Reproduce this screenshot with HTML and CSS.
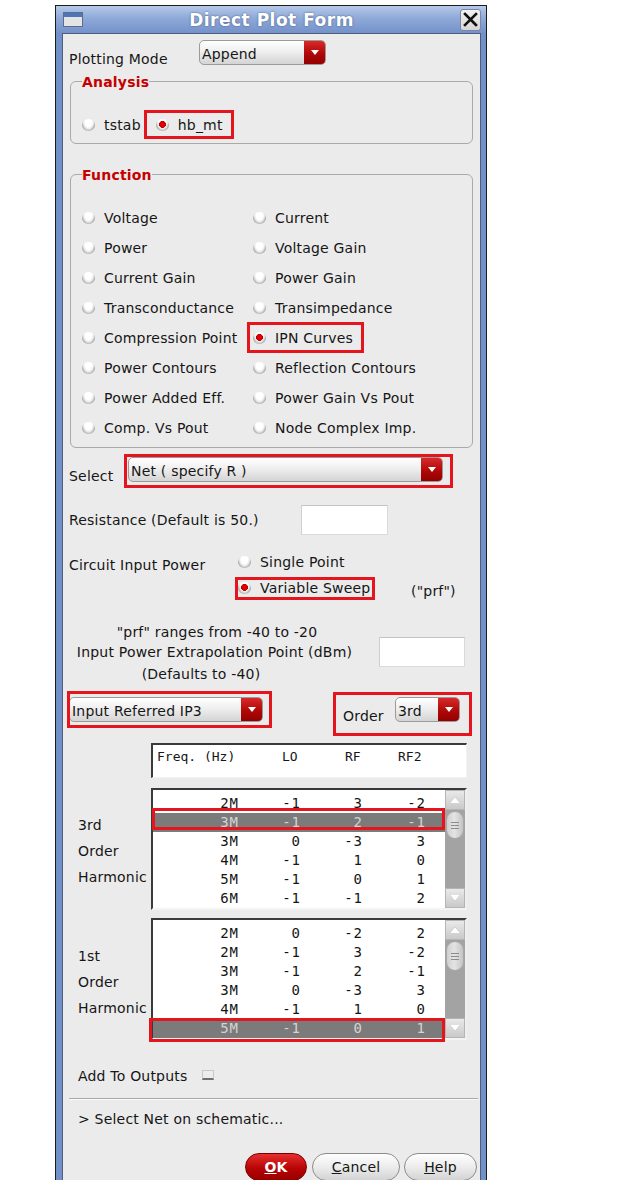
FILE: index.html
```html
<!DOCTYPE html>
<html lang="en">
<head>
<meta charset="utf-8">
<title>Direct Plot Form</title>
<link rel="stylesheet" href="styles.css">
</head>
<body>
<div class="window">
  <div class="titlebar">
    <span class="win-icon"></span>
    <span class="title">Direct Plot Form</span>
    <span class="close"><svg width="15" height="15" viewBox="0 0 15 15"><path d="M2 2L13 13M13 2L2 13" stroke="#111" stroke-width="2.6" stroke-linecap="square" fill="none"/></svg></span>
  </div>
  <div class="content">
    <div class="field-row row-plot">
      <span class="lbl lbl-plot">Plotting Mode</span>
      <div class="combo combo-append"><span class="combo-text">Append</span><span class="combo-btn"></span></div>
    </div>

    <fieldset class="group group-analysis">
      <legend>Analysis</legend>
      <div class="radio-row">
        <span class="opt"><span class="radio"></span>tstab</span>
        <span class="opt opt-hb mark mark-hb"><span class="radio on"></span>hb_mt</span>
      </div>
    </fieldset>

    <fieldset class="group group-function">
      <legend>Function</legend>
      <div class="func-grid">
        <span class="opt"><span class="radio"></span>Voltage</span>
        <span class="opt"><span class="radio"></span>Current</span>
        <span class="opt"><span class="radio"></span>Power</span>
        <span class="opt"><span class="radio"></span>Voltage Gain</span>
        <span class="opt"><span class="radio"></span>Current Gain</span>
        <span class="opt"><span class="radio"></span>Power Gain</span>
        <span class="opt"><span class="radio"></span>Transconductance</span>
        <span class="opt"><span class="radio"></span>Transimpedance</span>
        <span class="opt"><span class="radio"></span>Compression Point</span>
        <span class="opt mark mark-ipn"><span class="radio on"></span>IPN Curves</span>
        <span class="opt"><span class="radio"></span>Power Contours</span>
        <span class="opt"><span class="radio"></span>Reflection Contours</span>
        <span class="opt"><span class="radio"></span>Power Added Eff.</span>
        <span class="opt"><span class="radio"></span>Power Gain Vs Pout</span>
        <span class="opt"><span class="radio"></span>Comp. Vs Pout</span>
        <span class="opt"><span class="radio"></span>Node Complex Imp.</span>
      </div>
    </fieldset>

    <div class="field-row row-select">
      <span class="lbl lbl-select">Select</span>
      <div class="combo combo-net mark mark-select"><span class="combo-text">Net ( specify R )</span><span class="combo-btn"></span></div>
    </div>

    <div class="row-res">
      <span class="lbl-res">Resistance (Default is 50.)</span>
      <span class="entry"></span>
    </div>

    <div class="power-grid">
      <span class="lbl-power">Circuit Input Power</span>
      <span class="opt opt-line"><span class="radio"></span>Single Point</span>
      <span class="opt opt-line opt-sweep mark mark-sweep"><span class="radio on"></span>Variable Sweep</span>
      <span class="prf-tag">("prf")</span>
    </div>

    <div class="prf">
      <div class="prf-text">
        <div class="prf-l1">"prf" ranges from -40 to -20</div>
        <div>Input Power Extrapolation Point (dBm)</div>
        <div class="prf-l3">(Defaults to -40)</div>
      </div>
      <span class="entry entry-prf"></span>
    </div>

    <div class="row-ip3">
      <div class="combo combo-ip3 mark mark-ip3"><span class="combo-text">Input Referred IP3</span><span class="combo-btn"></span></div>
      <div class="order mark mark-order">
        <span class="lbl lbl-order">Order</span>
        <div class="combo combo-order"><span class="combo-text">3rd</span><span class="combo-btn"></span></div>
      </div>
    </div>

    <div class="hdr">
      <span class="h-freq">Freq. (Hz)</span>
      <span class="h-lo">LO</span>
      <span class="h-rf">RF</span>
      <span>RF2</span>
    </div>

    <div class="harm harm-3rd">
      <div class="harm-lbl">3rd<br>Order<br>Harmonic</div>
      <div class="listbox">
        <div class="rows">
          <div class="r"><span>2M</span><span>-1</span><span>3</span><span>-2</span></div>
          <div class="r sel mark mark-r1"><span>3M</span><span>-1</span><span>2</span><span>-1</span></div>
          <div class="r"><span>3M</span><span>0</span><span>-3</span><span>3</span></div>
          <div class="r"><span>4M</span><span>-1</span><span>1</span><span>0</span></div>
          <div class="r"><span>5M</span><span>-1</span><span>0</span><span>1</span></div>
          <div class="r"><span>6M</span><span>-1</span><span>-1</span><span>2</span></div>
        </div>
        <div class="sbar"><span class="sb-up"></span><span class="sb-thumb"></span><span class="sb-down"></span></div>
      </div>
    </div>

    <div class="harm harm-1st">
      <div class="harm-lbl">1st<br>Order<br>Harmonic</div>
      <div class="listbox">
        <div class="rows">
          <div class="r"><span>2M</span><span>0</span><span>-2</span><span>2</span></div>
          <div class="r"><span>2M</span><span>-1</span><span>3</span><span>-2</span></div>
          <div class="r"><span>3M</span><span>-1</span><span>2</span><span>-1</span></div>
          <div class="r"><span>3M</span><span>0</span><span>-3</span><span>3</span></div>
          <div class="r"><span>4M</span><span>-1</span><span>1</span><span>0</span></div>
          <div class="r sel mark mark-r2"><span>5M</span><span>-1</span><span>0</span><span>1</span></div>
        </div>
        <div class="sbar"><span class="sb-up"></span><span class="sb-thumb sb-thumb2"></span><span class="sb-down"></span></div>
      </div>
    </div>

    <div class="row-add">
      <span>Add To Outputs</span>
      <span class="check"></span>
    </div>

    <div class="sep"></div>

    <div class="status">&gt; Select Net on schematic...</div>

    <div class="btns">
      <span class="btn btn-ok"><u>O</u>K</span>
      <span class="btn btn-cancel"><u>C</u>ancel</span>
      <span class="btn btn-help"><u>H</u>elp</span>
    </div>
  </div>
</div>
</body>
</html>
```

FILE: styles.css
```css
* { box-sizing: border-box; }
html, body { margin: 0; padding: 0; overflow: hidden; background: #ffffff; }
body {
  font-family: "DejaVu Sans", "Liberation Sans", sans-serif;
  font-size: 14px;
  line-height: 16px;
  letter-spacing: 0.2px;
  color: #161616;
}

/* window frame */
.window {
  width: 432px;
  margin: 5px 0 0 55px;
  border: 1px solid #1c1c1c;
  border-bottom: none;
  background: #7391c9;
}
.titlebar {
  height: 27px;
  display: flex;
  align-items: center;
  padding: 0 5px 0 7px;
  background: linear-gradient(#b6c9e8, #8fa9d8 45%, #7492ca);
}
.win-icon {
  width: 20px;
  height: 15px;
  flex: none;
  border: 1px solid #5a6c90;
  background: linear-gradient(#4f74b8 0 4px, #e4e4e4 4px);
}
.title {
  flex: 1;
  text-align: center;
  color: #ffffff;
  font-weight: bold;
  font-size: 17px;
  letter-spacing: 0.5px;
  text-shadow: 0 0 2px rgba(30, 50, 90, 0.7);
}
.close {
  width: 21px;
  height: 22px;
  flex: none;
  display: flex;
  align-items: center;
  justify-content: center;
  border: 1px solid #7a86a3;
  border-radius: 3px;
  background: linear-gradient(#f2f2f2, #d6d6d6);
}

.content {
  margin: 0 5px 0 6px;
  border: 1px solid #4e5d7c;
  border-bottom: none;
  background: #ebebeb;
  padding: 0 0 20px 6px;
}

/* annotation rings */
.mark { position: relative; }
.mark::after {
  content: "";
  position: absolute;
  border: 3px solid #e5151d;
  pointer-events: none;
}
.mark-hb::after { inset: 0 -11px 0 -12px; }
.mark-ipn::after { inset: -1px -11px 0 -6px; }
.mark-select::after { inset: -4px -11px -7px -5px; }
.mark-sweep::after { inset: -1px -5px -2px -3px; }
.mark-ip3::after { inset: -7px -10px -7px -3px; }
.mark-order::after { inset: -5px -12px -12px -10px; }
.mark-r1::after { inset: -5px 0 2px -1px; }
.mark-r2::after { inset: -1px 0 -4px -4px; }

/* label + combo rows */
.field-row { display: flex; align-items: flex-start; }
.lbl { margin-top: 11px; white-space: nowrap; flex: none; }
.row-plot { margin-top: 6px; }
.lbl-plot { width: 130px; }
.row-select { margin-top: 9px; }
.lbl-select { width: 59px; }

.combo {
  display: flex;
  height: 25px;
  flex: none;
  border: 1px solid #9b9b9b;
  border-radius: 5px;
  background: linear-gradient(#ffffff, #efefef 45%, #d4d4d4);
}
.combo-text {
  flex: 1;
  padding: 4px 0 0 2px;
  line-height: 18px;
  white-space: nowrap;
}
.combo-btn {
  width: 21px;
  flex: none;
  display: flex;
  align-items: center;
  justify-content: center;
  border-radius: 0 4px 4px 0;
  background: linear-gradient(#d92a2a, #b00808 55%, #930000);
}
.combo-btn::before {
  content: "";
  border-left: 4px solid transparent;
  border-right: 4px solid transparent;
  border-top: 5px solid #ffffff;
}
.combo-append { width: 127px; }
.combo-net { width: 315px; }
.combo-ip3 { width: 194px; }
.combo-order { width: 65px; }

/* group boxes */
.group {
  margin: 0 7px 0 1px;
  padding: 0 10px 4px 11px;
  border: 1px solid #aaaaaa;
  border-radius: 6px;
  min-width: 0;
}
.group legend {
  padding: 0;
  color: #c60000;
  font-weight: bold;
  line-height: 16px;
  position: relative;
  top: 1px;
}
.group-analysis { margin-top: 6px; }
.group-function { margin-top: 22px; }

.radio-row {
  display: flex;
  height: 29px;
  margin-top: 21px;
}
.opt {
  display: inline-flex;
  align-items: center;
  gap: 9px;
  white-space: nowrap;
}
.opt-hb { margin-left: 15px; }

.radio {
  width: 13px;
  height: 12px;
  flex: none;
  border-radius: 50%;
  background: radial-gradient(ellipse at 50% 25%, #ffffff 0 38%, #e6e6e6 55%, #9a9a9a 78%, #6f6f6f 100%);
}
.radio.on {
  background:
    radial-gradient(circle at 50% 45%, #e30000 0 2.6px, #a80000 3.2px, transparent 3.7px),
    radial-gradient(ellipse at 50% 25%, #ffffff 0 38%, #e6e6e6 55%, #9a9a9a 78%, #6f6f6f 100%);
}

.func-grid {
  display: grid;
  grid-template-columns: 171px auto;
  grid-auto-rows: 30px;
  padding: 21px 0 0 0;
  justify-items: start;
}

/* resistance */
.row-res {
  display: flex;
  align-items: center;
  height: 30px;
  margin-top: 21px;
}
.lbl-res { width: 232px; flex: none; }
.entry {
  display: block;
  width: 87px;
  height: 30px;
  flex: none;
  background: #ffffff;
  border: 1px solid #dadada;
  border-top-color: #c4c4c4;
  border-left-color: #cfcfcf;
}

/* circuit input power */
.power-grid {
  display: grid;
  grid-template-columns: 169px 173px auto;
  grid-template-rows: 20px 23px;
  row-gap: 6px;
  margin-top: 17px;
}
.lbl-power { grid-column: 1; grid-row: 1; margin-top: 5px; white-space: nowrap; }
.opt-line { line-height: 20px; justify-self: start; }
.power-grid .opt-line:nth-child(2) { grid-column: 2; grid-row: 1; }
.opt-sweep { grid-column: 2; grid-row: 2; height: 20px; }
.prf-tag { grid-column: 3; grid-row: 2; padding-top: 5px; }

/* prf text */
.prf {
  display: flex;
  align-items: flex-start;
  margin-top: 21px;
}
.prf-text {
  width: 291px;
  flex: none;
  text-align: center;
  line-height: 20px;
}
.prf-l1 { padding-left: 5px; }
.prf-l3 { margin-top: 2px; padding-right: 27px; }
.entry-prf { width: 86px; margin: 15px 0 0 19px; }

/* IP3 / order row */
.row-ip3 {
  display: flex;
  align-items: flex-start;
  margin-top: 13px;
}
.order {
  display: flex;
  align-items: flex-start;
  margin-left: 80px;
  height: 27px;
}
.lbl-order { width: 52px; }

/* table header */
.hdr {
  display: flex;
  width: 316px;
  height: 35px;
  margin: 19px 0 0 82px;
  padding: 4px 0 0 4px;
  background: #ffffff;
  border-top: 2px solid #3a3a3a;
  border-left: 2px solid #3a3a3a;
  border-right: 1px solid #f2f2f2;
  border-bottom: 1px solid #f2f2f2;
  font-family: "DejaVu Sans Mono", "Liberation Mono", monospace;
  font-size: 13px;
  line-height: 16px;
  letter-spacing: 0;
  white-space: pre;
}
.h-freq { width: 125px; }
.h-lo { width: 63px; }
.h-rf { width: 53px; }

/* harmonic lists */
.harm {
  display: flex;
  align-items: center;
}
.harm-3rd { margin-top: 10px; }
.harm-1st { margin-top: 8px; }
.harm-lbl {
  width: 82px;
  flex: none;
  padding: 4px 0 0 9px;
  line-height: 26px;
}
.harm-1st .harm-lbl { padding-top: 6px; }
.listbox {
  display: flex;
  width: 316px;
  height: 122px;
  flex: none;
  background: #ffffff;
  border-top: 2px solid #3a3a3a;
  border-left: 2px solid #3a3a3a;
  border-right: 2px solid #efefef;
  border-bottom: 2px solid #f4f4f4;
}
.rows {
  flex: 1;
  padding-top: 4px;
  font-family: "DejaVu Sans Mono", "Liberation Mono", monospace;
  font-size: 14px;
  letter-spacing: 1px;
  color: #151515;
}
.r {
  display: flex;
  height: 19px;
  line-height: 19px;
}
.r span { text-align: right; }
.r span:nth-child(1) { width: 86px; }
.r span:nth-child(2) { width: 62px; }
.r span:nth-child(3) { width: 62px; }
.r span:nth-child(4) { width: 63px; }
.r.sel {
  background: #7b7b7b;
  color: #d4d4d4;
}

.sbar {
  width: 20px;
  flex: none;
  display: flex;
  flex-direction: column;
  background: #a3a3a3;
}
.sb-up, .sb-down {
  height: 20px;
  flex: none;
  display: flex;
  align-items: center;
  justify-content: center;
  background: linear-gradient(#e9e9e9, #c9c9c9);
  border: 1px solid #b5b5b5;
}
.sb-down { margin-top: auto; }
.sb-up::before {
  content: "";
  border-left: 5px solid transparent;
  border-right: 5px solid transparent;
  border-bottom: 6px solid #ffffff;
  filter: drop-shadow(0 0 0.6px #777);
}
.sb-down::before {
  content: "";
  border-left: 5px solid transparent;
  border-right: 5px solid transparent;
  border-top: 6px solid #ffffff;
  filter: drop-shadow(0 0 0.6px #777);
}
.sb-thumb {
  height: 28px;
  flex: none;
  margin: 1px 1px 0;
  border-radius: 9px;
  border: 1px solid #a8a8a8;
  background: linear-gradient(90deg, #cfcfcf, #e4e4e4 45%, #c4c4c4);
  display: flex;
  align-items: center;
  justify-content: center;
}
.sb-thumb2 { height: 30px; }
.sb-thumb::before {
  content: "";
  width: 8px;
  height: 7px;
  background: repeating-linear-gradient(#8c8c8c 0 1px, transparent 1px 3px);
}

/* bottom area */
.row-add {
  display: flex;
  align-items: center;
  margin-top: 28px;
  padding-left: 9px;
}
.check {
  width: 12px;
  height: 10px;
  margin: -3px 0 0 15px;
  background: #ececec;
  border: 1px solid #c9c9c9;
  border-bottom: 2px solid #6f6f6f;
}
.sep {
  height: 2px;
  margin: 14px 2px 0 0;
  border-top: 1px solid #a9a9a9;
  border-bottom: 1px solid #fafafa;
}
.status {
  margin-top: 11px;
  padding-left: 9px;
}
.btns {
  display: flex;
  justify-content: flex-end;
  margin-top: 26px;
  padding-right: 3px;
}
.btn {
  height: 28px;
  display: flex;
  align-items: center;
  justify-content: center;
  border: 1px solid #8c8c8c;
  border-radius: 14px;
  background: linear-gradient(#fefefe, #ececec 50%, #d3d3d3);
  white-space: nowrap;
}
.btn-ok {
  width: 62px;
  color: #ffffff;
  font-weight: bold;
  border-color: #7a0000;
  background: linear-gradient(#e63030, #b80404 55%, #980000);
}
.btn-cancel { width: 88px; margin-left: 5px; }
.btn-help { width: 73px; margin-left: 4px; }
```
